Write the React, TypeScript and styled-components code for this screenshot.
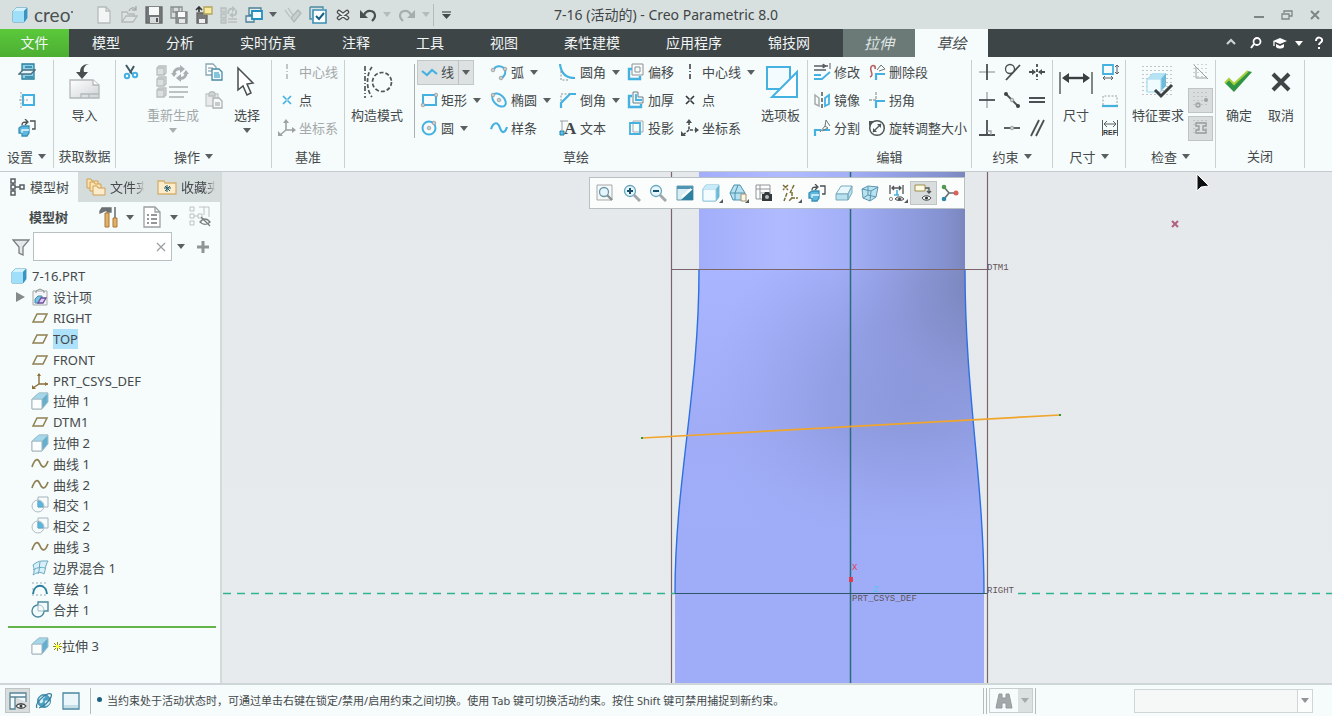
import React from 'react';
import styled, { createGlobalStyle, css } from 'styled-components';

const sans = `"Noto Sans", "Noto Sans CJK SC", sans-serif`;
const ink = '#44494b';
const line = '#505557';
const blue = '#45b1e0';
const teal = '#2a7f9e';
const dark = '#3e4547';

const GlobalStyle = createGlobalStyle`
  * { box-sizing: border-box; }
  body { margin: 0; font-family: ${sans}; font-size: 13px; line-height: 20px; color: ${ink}; background: #f6fbfb; }
  button, input, select { font: inherit; color: inherit; }
  button { border: 0; padding: 0; margin: 0; background: none; white-space: nowrap; }
  svg { display: block; flex: none; }
`;

/* ---------- icons ---------- */

type DrawProps = { w?: number; h?: number; children: React.ReactNode };
const Draw = ({ w = 18, h = w, children }: DrawProps) => (
  <svg width={w} height={h} viewBox={`0 0 ${w} ${h}`} fill="none" stroke={line} strokeWidth="1.3" aria-hidden="true">
    {children}
  </svg>
);

const Caret = ({ color = '#5a5f61' }: { color?: string }) => (
  <svg width="8" height="5" viewBox="0 0 8 5" aria-hidden="true"><path d="M0 0h8L4 5z" fill={color} /></svg>
);

const CreoCube = ({ w = 18 }: { w?: number }) => (
  <svg width={w} height={w} viewBox="0 0 18 18" aria-hidden="true">
    <path d="M2 5L5 2h11v10l-3 4H2z" fill="#4aa9d4" stroke="#4c9fc4" />
    <path d="M2 5h11v11H2z" fill="#a0dff9" />
    <path d="M2 5l3-3h11l-3 3z" fill="#d2f2fe" />
    <path d="M13 5l3-3v10l-3 4z" fill="#3a94c0" />
  </svg>
);

const NewIcon = () => <Draw><path d="M3 1h8l4 4v12H3z" fill="#f3f5f5" stroke="#b5bbbb" /><path d="M11 1v4h4" stroke="#b5bbbb" /></Draw>;
const OpenIcon = () => <Draw><path d="M2 16V6h5l1 2h6v3M2 16l4-6h11l-4 6z" fill="#dfe3e3" stroke="#b3b9b9" /><path d="M9 5c1-3 4-4 7-2M16 0v4h-4" stroke="#a6acac" /></Draw>;
const SaveIcon = () => <Draw><path d="M1 1h16v16H1z" fill="#737779" stroke="#66696a" /><path d="M4 1h10v8H4z" fill="#f7f8f8" stroke="none" /><path d="M5 11h9v6H5z" fill="#d9dcdc" stroke="none" /><path d="M11 12h2v4h-2z" fill="#555" stroke="none" /></Draw>;
const SaveAsIcon = () => <Draw><path d="M1 1h11v11H1z" fill="#d9dddd" stroke="#888d8e" /><path d="M3 1v5h6V1" stroke="#888d8e" /><path d="M6 6h11v11H6z" fill="#8b9091" stroke="#808586" /><path d="M8 6h7v5H8z" fill="#fafafa" stroke="none" /><path d="M9 13h6v4H9z" fill="#e5e7e7" stroke="none" /></Draw>;
const SaveBackupIcon = () => <Draw><path d="M2 7h10v10H2z" fill="#77797a" stroke="#666" /><path d="M4 13h6v4H4z" fill="#eee" stroke="none" /><path d="M9 1h8v7H9z" fill="#f7ea9c" stroke="#b3a45a" /><path d="M4 6V2M1 4l3-3 3 3" stroke="#333" strokeWidth="1.6" /></Draw>;
const RegenSmallIcon = () => <Draw><g stroke="#b8bfbf"><path d="M1 2h5v4H1zM1 8h5v4H1zM1 14h5v3H1zM8 13h9M8 16h9" fill="#cdd3d3" /><path d="M8 8c0-4 2-6 5-5M16 4c1 4-1 6-4 5" strokeWidth="2" /><path d="M12 0l4 3-4 3zM13 6l-4 3 4 3z" fill="#b8bfbf" stroke="none" /></g></Draw>;
const WindowsIcon = () => <Draw><path d="M4 2h12v7H4zM1 10h8v6H1z" stroke="#4b7f96" fill="#e5edef" /><path d="M7 5h10v8H7z" fill="#f6fdff" stroke="#2490bf" strokeWidth="1.8" /></Draw>;
const PinIcon = () => <Draw><path d="M1 4l5 7M4 2l5 7" stroke="#bcc3c3" /><path d="M7 12l7-8 3 3-7 9z" fill="#c9cfcf" stroke="#b0b7b7" /></Draw>;
const CheckBoxIcon = () => <Draw><path d="M1 1h13v2M1 1v12h2" stroke="#4b8aa3" /><path d="M4 4h13v13H4z" fill="#fdffff" stroke="#3a8fb5" strokeWidth="1.6" /><path d="M7 10l3 3 5-6" stroke="#185f86" strokeWidth="2" /></Draw>;
const CloseDotsIcon = () => <Draw w={14}><path d="M3 4l8 6M11 4L3 10" stroke="#4a4e50" strokeWidth="4.500" strokeLinecap="round" /><path d="M3 4l8 6M11 4L3 10" stroke="#e8eded" strokeWidth="2" strokeLinecap="round" /></Draw>;
const UndoIcon = ({ color = '#4a4f51', flip = false }) => (
  <Draw w={18} h={14}><g transform={flip ? 'translate(18 0) scale(-1 1)' : undefined}><path d="M1 2v8h8z" fill={color} stroke="none" /><path d="M5 7c3-6 11-5 11 1 0 2-1 3-3 5" stroke={color} strokeWidth="2.2" /></g></Draw>
);

const SketchSetupIcon = () => <Draw><path d="M4 1h12v15H4z" fill="#8fd0ea" stroke={teal} /><path d="M7 4h7M7 14h8" stroke={teal} /><path d="M1 11l4-4h12l-4 4z" fill="#e7f6fb" stroke="#4b6f80" /></Draw>;
const ReferencesIcon = () => <Draw><path d="M5 4h11v10H5z" stroke={blue} strokeWidth="2" /><path d="M3 1v16M1 9h10" stroke="#9aa2a4" strokeDasharray="2 1.5" strokeWidth="1" /></Draw>;
const SketchViewIcon = () => <Draw><path d="M12 2h5v8h-3M4 6c0-3 2-3 5-3M7 0l3 3-3 3" stroke="#4a4f51" /><path d="M1 9l3-2h7v7l-2 3H4v-3H1z" fill="#5cb8de" stroke="#3a8fb5" /><path d="M4 14v-3h7" stroke="#e6f7fd" /></Draw>;
const ImportIcon = () => <Draw w={32} h={38}><defs><linearGradient id="imp" x2="1" y2="1"><stop stopColor="#fff" /><stop offset="1" stopColor="#cfd3d5" /></linearGradient></defs><path d="M1 17h23l6 5v13H1z" fill="url(#imp)" stroke="#b3b8ba" /><path d="M24 17v5h6" fill="#fff" stroke="#b3b8ba" /><path d="M12 35v-4h18M20 31v4" stroke="#b3b8ba" /><path d="M20 1c-4 1-6 4-5 8h4l-6 7-6-7h4c0-5 3-8 9-8z" fill="#4a4e50" stroke="none" /></Draw>;
const CutIcon = () => <Draw w={16}><path d="M3 1l6 9M11 2L7 9" stroke="#3f5a66" strokeWidth="2" /><circle cx="4" cy="12" r="2.200" stroke={blue} strokeWidth="2" /><circle cx="12" cy="11" r="2.200" stroke={blue} strokeWidth="2" /></Draw>;
const RegenIcon = () => <Draw w={34} h={34}><g fill="#dcdfe0" stroke="#b9bebf"><path d="M1 3l2-2h7v7l-2 2H1zM1 14l2-2h7v7l-2 2H1zM1 25l2-2h7v7l-2 2H1z" /><path d="M1 3h7v7M1 14h7v7M1 25h7v7" fill="none" /></g><path d="M13 22h19M13 27h19M13 32h15" stroke="#bcc1c2" strokeWidth="2" /><path d="M18 9c0-4 3-6 7-5M30 8c0 4-3 6-7 5" stroke="#a9aeb0" strokeWidth="3" /><path d="M24 0l5 4-5 4zM25 9l-5 4 5 4zM15 8h6l-3 4zM27 9h6l-3-4z" fill="#a9aeb0" stroke="none" /></Draw>;
const CopyIcon = () => <Draw><path d="M1 1h7l3 3v8H1z" fill="#fff" stroke="#8aa7b2" /><path d="M3 5h5M3 8h5" stroke="#9db4bd" /><path d="M7 6h7l3 3v8H7z" fill="#f4fbfd" stroke="#4b8aa3" /><path d="M9 10h5M9 12h6M9 14h6" stroke="#5fb3d3" /></Draw>;
const PasteIcon = () => <Draw><path d="M1 3h12v12H1z" fill="#e9ebeb" stroke="#c4c9ca" /><path d="M4 3c0-3 6-3 6 0v2H4z" fill="#d2d5d6" stroke="#b9bebf" /><path d="M8 7h6l3 3v7H8z" fill="#f7f8f8" stroke="#acb1b2" /><path d="M10 12h5M10 14h5" stroke="#b5babb" /></Draw>;
const SelectIcon = () => <Draw w={24} h={34}><path d="M3 3v22l5-4 4 9 4-2-4-9 6-1z" fill="#fff" stroke="#4a4e50" strokeWidth="1.500" /></Draw>;
const DatumLineIcon = ({ color = '#3e4244' }) => <Draw><path d="M9 1v16" stroke={color} strokeWidth="1.600" strokeDasharray="5 2 1 2" /></Draw>;
const PointIcon = ({ color = '#33383a' }) => <Draw><path d="M5 5l3 3M13 5l-3 3M5 13l3-3M13 13l-3-3" stroke={color} strokeWidth="1.700" /><circle cx="9" cy="9" r="1.200" stroke={color} strokeWidth="0.800" /></Draw>;
const CsysIcon = ({ color = '#4b5052', dash = false }) => <Draw><path d="M8 3v8h8M8 11l-6 5" stroke={color} strokeWidth="1.600" strokeDasharray={dash ? '3 1.500' : undefined} /><path d="M5 4l3-4 3 4zM14 8l4 3-4 3zM0 12v5h5z" fill={color} stroke="none" /></Draw>;
const ConstructionIcon = () => <Draw w={32} h={34}><path d="M4 1v32" strokeDasharray="5 2 1 2" strokeWidth="1.700" /><path d="M11 2C5 9 5 25 11 32" strokeDasharray="4 2" strokeWidth="1.700" /><circle cx="21" cy="17" r="9.500" strokeDasharray="4 2" strokeWidth="1.700" /></Draw>;
const Dot = ({ x, y }: { x: number; y: number }) => <circle cx={x} cy={y} r="1.800" fill="#c9cdcf" stroke="#8d9394" strokeWidth="0.700" />;
const LineIcon = () => <Draw><path d="M2 8l5 4 5-5 5 4" stroke={blue} strokeWidth="2.200" /></Draw>;
const ArcIcon = () => <Draw><path d="M4 6c3-5 13-3 11 5-1 2-2 4-4 4" stroke={blue} strokeWidth="2" /><Dot x={3} y={7} /><Dot x={11} y={15} /><Dot x={15} y={6} /></Draw>;
const FilletIcon = () => <Draw><path d="M1 1c1 9 6 14 15 14" stroke={blue} strokeWidth="2.200" /><path d="M2 8v9h8" stroke="#8a8f91" strokeDasharray="2 1.500" strokeWidth="1" /></Draw>;
const OffsetIcon = () => <Draw><path d="M5 1h11v11H5zM8 4h5v5H8z" stroke="#8d9294" strokeWidth="1" /><path d="M5 6H2v10h11v-3" stroke={blue} strokeWidth="2.400" /></Draw>;
const RectIcon = () => <Draw><path d="M3 4h13v10H3z" stroke={blue} strokeWidth="2" /><Dot x={3} y={14} /><Dot x={16} y={4} /></Draw>;
const EllipseIcon = () => <Draw><ellipse cx="9" cy="9" rx="8" ry="5" transform="rotate(42 9 9)" stroke={blue} strokeWidth="2" /><Dot x={9} y={9} /><Dot x={3} y={4} /></Draw>;
const ChamferIcon = () => <Draw><path d="M2 17v-5L11 3h6" stroke={blue} strokeWidth="2.200" /><path d="M2 10V3h8" stroke="#8a8f91" strokeDasharray="2 1.500" strokeWidth="1" /></Draw>;
const ThickenIcon = () => <Draw><path d="M6 1h5v5h5v6H6z" stroke="#6f8088" fill="#eef7fa" strokeWidth="1" /><path d="M5 5H2v11h12v-3" stroke={blue} strokeWidth="2.400" /><path d="M9 3v6h6" stroke={blue} strokeWidth="1.800" /></Draw>;
const CircleIcon = () => <Draw><circle cx="9" cy="9" r="6.500" stroke={blue} strokeWidth="2" /><Dot x={9} y={9} /><Dot x={14} y={4} /></Draw>;
const SplineIcon = () => <Draw><path d="M1 10c3-8 7-7 9-1s5 5 7-1" stroke={blue} strokeWidth="2.200" /></Draw>;
const TextIcon = () => (
  <svg width="18" height="18" viewBox="0 0 18 18" aria-hidden="true">
    <path d="M1 2h8M3 2v9" stroke="#9aa0a2" fill="none" />
    <text x="5" y="15" fontSize="17" fontWeight="700" fontFamily="Liberation Serif, serif" fill="#43484a">A</text>
    <path d="M1 12h4v4H1z" fill="#5ec2ea" stroke="#1c7fa8" />
  </svg>
);
const ProjectIcon = () => <Draw><path d="M6 2h10v11H6z" stroke="#a5abad" strokeWidth="1" /><path d="M3 4h10v11H3z" stroke={blue} strokeWidth="1.800" /></Draw>;
const PaletteIcon = () => <Draw w={36} h={36}><path d="M4 3h23v22H4z" fill="#f4fbfe" stroke={blue} strokeWidth="2" /><path d="M34 8v25H9z" fill="#fcfeff" stroke={blue} strokeWidth="2" /></Draw>;
const ModifyIcon = () => <Draw><path d="M1 3h14M1 7h12" stroke="#5a5f61" strokeWidth="1.600" /><path d="M10 1l3 2-3 2zM17 0v6" fill="#5a5f61" stroke="#5a5f61" strokeWidth="1" /><path d="M1 16h8l8-7M1 12h7" stroke={blue} strokeWidth="1.800" /></Draw>;
const MirrorIcon = () => <Draw><path d="M2 4l4 3v8l-4-2z" stroke="#a5aaac" strokeWidth="1.500" /><path d="M9 1v16" strokeDasharray="4 2" strokeWidth="1.500" /><path d="M16 4l-4 3v8l4-2z" stroke={blue} strokeWidth="1.800" /></Draw>;
const DivideIcon = () => <Draw><path d="M2 17v-6h6M10 11h7" stroke={blue} strokeWidth="2.200" /><path d="M7 13l5-6 3 2-6 3M12 7l1-6 4 6" stroke="#707577" strokeWidth="1" /></Draw>;
const DeleteSegIcon = () => <Draw><path d="M2 14c5-2-1-6 1-10 2-3 5-1 4 2" stroke="#b66060" strokeWidth="1.600" /><path d="M8 17v-6h9" stroke={blue} strokeWidth="2.200" /><path d="M9 7l4-5 4 4-6 2" stroke="#707577" strokeWidth="1" /></Draw>;
const CornerIcon = () => <Draw><path d="M8 1v9M1 9h7" stroke="#9aa0a2" strokeDasharray="3 1" /><path d="M8 17v-7h9" stroke={blue} strokeWidth="2.200" /></Draw>;
const RotateIcon = () => <Draw><circle cx="9" cy="9" r="7.300" strokeWidth="1.500" /><path d="M5 13l8-8" strokeWidth="1.200" /><path d="M9 5h4v4zM5 9v4h4zM1 2h5L1 7z" fill={line} stroke="none" /></Draw>;

const c2 = { stroke: '#4a4f51', strokeWidth: 1.8 };
const VerticalC = () => <Draw><path d="M1 9h16" stroke="#9ba0a2" /><path d="M9 1v16" {...c2} /></Draw>;
const TangentC = () => <Draw><circle cx="7" cy="6" r="4.500" stroke="#4a4f51" /><path d="M3 17L17 2" {...c2} /></Draw>;
const SymmetricC = () => <Draw><path d="M9 1v16" strokeDasharray="3 2" {...c2} /><path d="M1 9h6M11 9h6" {...c2} /><path d="M4 6l4 3-4 3zM14 6l-4 3 4 3z" fill="#4a4f51" stroke="none" /></Draw>;
const HorizontalC = () => <Draw><path d="M9 1v16" stroke="#9ba0a2" /><path d="M1 9h16" {...c2} /></Draw>;
const MidpointC = () => <Draw><path d="M3 3l12 12" {...c2} /><circle cx="3" cy="3" r="2" fill="#3e4345" stroke="none" /><circle cx="15" cy="15" r="2" fill="#3e4345" stroke="none" /><Dot x={9} y={9} /></Draw>;
const EqualC = () => <Draw><path d="M1 7h16M1 11h16" {...c2} /></Draw>;
const PerpendicularC = () => <Draw><path d="M1 16h16M9 1v15" {...c2} /><path d="M9 12h4v4" stroke="#9ba0a2" /></Draw>;
const CoincidentC = () => <Draw><path d="M1 9h16" {...c2} /><Dot x={9} y={9} /></Draw>;
const ParallelC = () => <Draw><path d="M3 17L11 1M8 17L16 1" {...c2} /></Draw>;

const DimensionIcon = () => <Draw w={34} h={26}><path d="M1 3v22M33 3v22" strokeWidth="1.400" /><path d="M5 9h24" stroke="#3a3f41" strokeWidth="2.400" /><path d="M3 9l7-5v10zM31 9l-7-5v10z" fill="#3a3f41" stroke="none" /></Draw>;
const PerimeterIcon = () => <Draw><path d="M2 2h10v9H2z" stroke={blue} strokeWidth="1.800" /><path d="M16 2v9M2 15h10M14 4l2-2 2 2M14 9l2 2 2-2M4 13l-2 2 2 2M10 13l2 2-2 2" stroke="#5a5f61" strokeWidth="1" /></Draw>;
const BaselineIcon = () => <Draw><path d="M2 14V5h14v9" stroke="#9ba0a2" strokeWidth="1" strokeDasharray="2 1.500" /><path d="M1 15h16" stroke={blue} strokeWidth="2.200" /></Draw>;
const RefDimIcon = () => (
  <svg width="18" height="18" viewBox="0 0 18 18" aria-hidden="true">
    <path d="M1.500 1v16M16.500 1v16M3 5h12M6 2L3 5l3 3M12 2l3 3-3 3" fill="none" stroke="#5a5f61" />
    <text x="9" y="16" textAnchor="middle" fontSize="7" fontWeight="700" fontFamily="Liberation Sans, sans-serif" fill="#33383a">REF</text>
  </svg>
);
const FeatureReqIcon = () => <Draw w={34} h={34}><path d="M2 1v32M6 1v32M10 1v32M14 1v32M18 1v32M22 1v32M26 1v32M30 1v32" stroke="#8b9395" strokeWidth="1" strokeDasharray="1 3" /><path d="M6 14l6-6h13v13l-6 6H6z" fill="#6dbadb" stroke="none" /><path d="M6 14h14v13H6z" fill="#f0fbff" stroke="#9fd4ea" strokeWidth="1" /><path d="M6 14l6-6h13l-5 6z" fill="#b5e3f4" stroke="none" /><path d="M14 25l6 6 11-11" stroke="#3c4143" strokeWidth="3" /></Draw>;
const Grid = () => <path d="M2 1v16M6 1v16M10 1v16M14 1v16" stroke="#a7acad" strokeWidth="1" strokeDasharray="1 3" />;
const OverlapIcon = () => <Draw><Grid /><path d="M4 4v11h11zM2 2l14 14" stroke="#9a9fa0" strokeWidth="1" /></Draw>;
const OpenEndsIcon = () => <Draw><Grid /><circle cx="14" cy="9" r="2" fill="#9ca1a2" stroke="none" /><circle cx="6" cy="14" r="2" stroke="#9ca1a2" /></Draw>;
const ShadeLoopIcon = () => <Draw><Grid /><path d="M4 4h10v3h-3v4h3v3H4v-3h3V7H4z" fill="#dfe2e2" stroke="#94999a" /></Draw>;
const OkIcon = () => <Draw w={32} h={28}><path d="M2 15l4-4 5 5L25 3l4 1-18 20z" fill="#2f9444" stroke="none" /><path d="M2 15l4-4 5 5L25 3" stroke="#a6cf3b" strokeWidth="2" /></Draw>;
const CancelIcon = () => <Draw w={24} h={28}><path d="M4 6l16 16M20 6L4 22" stroke="#3f4446" strokeWidth="4" /></Draw>;

const TreeTabIcon = () => <Draw><path d="M3 1h4v4H3zM3 7h4v4H3zM3 13h4v4H3zM12 7h4v4h-4zM7 9h5M5 5v2M5 11v2" stroke="#5a5f61" strokeWidth="1.500" /></Draw>;
const FolderTabIcon = () => <Draw w={20}><g fill="#fbe3b1" stroke="#cf9f52" strokeWidth="1"><path d="M1 2h4l1 2h6v7H1z" /><path d="M4 5h4l1 2h6v7H4z" /><path d="M7 9h4l1 2h7v7H7z" fill="#fdeccb" /></g></Draw>;
const FavTabIcon = () => <Draw w={20}><path d="M1 4h6l1 2h11v11H1z" fill="#fdeccb" stroke="#d3b06f" /><path d="M10 8v7M7 11h7M8 9l5 5M13 9l-5 5" stroke="#1f5c70" strokeWidth="1" /></Draw>;
const ToolsIcon = () => <Draw w={20} h={22}><path d="M1 5l2-3h9v4H8V4l-7 3z" fill="#6e7375" stroke="#6a6f71" /><path d="M6 7h4v14H6z" fill="#e3b064" stroke="#a9793a" strokeWidth="1" /><path d="M16 1v11" stroke="#8a8f91" strokeWidth="2" /><path d="M14 12h4v9h-4z" fill="#e3b064" stroke="#a9793a" strokeWidth="1" /></Draw>;
const ListIcon = () => <Draw w={18} h={22}><path d="M1 1h11l5 5v15H1z" fill="#fff" stroke="#9ba0a2" /><path d="M12 1v5h5" stroke="#9ba0a2" /><path d="M4 9h2M4 13h2M4 17h2M8 9h6M8 13h6M8 17h6" stroke="#707577" /></Draw>;
const HideTreeIcon = () => <Draw w={22}><path d="M1 1h4v4H1zM1 8h4v4H1zM1 15h4v4H1zM9 8h4v4H9zM5 10h4M10 1h10v10M15 1v8" stroke="#bcc1c2" strokeWidth="1" /><path d="M11 16c3-4 7-4 10 0-3 3-7 3-10 0zM12 11l9 9" stroke="#777c7e" /></Draw>;
const FilterIcon = () => <Draw><path d="M1 2h16l-6 7v8l-4-2V9z" fill="#e5e8e9" stroke="#7a7f81" /></Draw>;

const DesignItemsIcon = () => <Draw><path d="M2 3h14v14H2z" fill="#f2f4f5" stroke="#a5aaac" strokeWidth="1" /><path d="M5 5V3l4-2 4 2v2" stroke="#8b9092" strokeWidth="1" /><path d="M4 11l3-3h4v4l-3 3H4z" fill="#72c3e4" stroke="#4b8aa3" strokeWidth="1" /><path d="M7 15l3-5h5l-3 5z" fill="#e0cdf2" stroke="#6a4f9a" /></Draw>;
const PlaneIcon = () => <Draw><path d="M6 5h10l-4 8H2z" stroke="#8f8052" strokeWidth="1.500" /></Draw>;
const TreeCsysIcon = () => <Draw><path d="M8 2v10h9M8 12l-6 4" stroke="#8a6f38" strokeWidth="1.400" /><path d="M6 4l2-3 2 3zM14 10l3 2-3 2zM1 13v4h4z" fill="#8a6f38" stroke="none" /></Draw>;
const ExtrudeIcon = () => <Draw><path d="M1 7l7-6h9v9l-6 7H1z" fill="#62afd0" stroke="#a3c2ce" strokeWidth="1" /><path d="M1 7h10v10H1z" fill="#fafeff" stroke="#a8b3b8" strokeWidth="1" /><path d="M1 7l7-6h9l-6 6z" fill="#a5d7ea" stroke="#a3c2ce" strokeWidth="1" /></Draw>;
const CurveIcon = () => <Draw><path d="M1 12C4 3 7 3 9 8s5 6 8-2" stroke="#8f8052" strokeWidth="1.700" /></Draw>;
const IntersectIcon = () => <Draw><path d="M7 1h10v10H7z" stroke="#a3b4bb" strokeWidth="1" /><circle cx="7" cy="10" r="6" stroke="#b0bdc3" strokeWidth="1" /><path d="M7 5a5 5 0 015 5v1H7z" fill="#57b9e2" stroke="#5aa9c9" strokeWidth="1" /></Draw>;
const BlendIcon = () => <Draw><path d="M2 6c3-2 5-4 9-4h6c-3 4-2 8-4 13-4-3-8-1-11 1 2-4 1-7 0-10z" fill="#d8f0f9" stroke="#6aa9c2" strokeWidth="1" /><path d="M9 3c-1 4 0 8-2 12M2 11c5-3 9-3 12-2" stroke="#6aa9c2" strokeWidth="1" /></Draw>;
const SketchIcon = () => <Draw><path d="M1 3h16M1 9h3M14 9h3M1 15h16" stroke="#8fabb6" strokeDasharray="2 2" strokeWidth="1" /><path d="M2 14c1-11 13-11 14 0" stroke={teal} strokeWidth="2" /></Draw>;
const MergeIcon = () => <Draw><path d="M7 4V1h10v9h-4a6 6 0 11-6-6z" fill="#f3fbfd" stroke="#4b8a9d" strokeWidth="1.400" /><path d="M7 4v6h6c0-4-2-6-6-6" stroke="#9dbcc6" strokeWidth="1" /></Draw>;
const NewStarIcon = () => <Draw w={9}><path d="M4.500 0v9M0 4.500h9M1 1l7 7M8 1L1 8" stroke="#8a9000" strokeWidth="1" /><path d="M3 3h3v3H3z" fill="#ffff28" stroke="none" /></Draw>;

const mag = (sign: string) => <Draw><path d="M11 11l6 6" stroke="#a3a8aa" strokeWidth="3" /><circle cx="7" cy="7" r="5.500" fill="#e6f6fc" stroke="#6aa5bc" /><path d={sign} stroke="#15516d" strokeWidth="2" /></Draw>;
const RefitIcon = () => <Draw><path d="M1 1h15v15H1z" stroke="#a3a9ab" fill="#f7f9f9" strokeWidth="1" /><circle cx="8" cy="8" r="4.500" fill="#e4f5fb" stroke="#6a96a8" /><path d="M11 11l5 5" stroke="#8a9092" strokeWidth="2.400" /></Draw>;
const RepaintIcon = () => <Draw><path d="M1 2h16v14H1z" fill="#d9edf4" stroke="#6a9caf" strokeWidth="1" /><path d="M1 2h16v3H1z" fill="#4f94b2" stroke="none" /><path d="M5 16L17 5v11z" fill="#2f7f9f" stroke="none" /><path d="M6 13l9-8" stroke="#fff" strokeWidth="2" /></Draw>;
const ShadeBoxIcon = () => <Draw><path d="M1 5l3-4h13v12l-3 4H1z" fill="#69b8d8" stroke="#7abbd5" strokeWidth="1" /><path d="M1 5h13v12H1z" fill="#f3fcff" stroke="#9accdf" strokeWidth="1" /><path d="M1 5l3-4h13l-3 4z" fill="#c8ebf7" stroke="none" /></Draw>;
const SavedViewIcon = () => <Draw><path d="M1 9l4-8h6l5 8-2 7H4z" fill="#b5e1f1" stroke="#4f93ae" strokeWidth="1" /><path d="M1 9h15M6 9l3-8M6 9v7" stroke="#4f93ae" strokeWidth="1" /><path d="M12 10h5v7h-5z" fill="#fff6df" stroke="#9a9278" strokeWidth="1" /></Draw>;
const ViewMgrIcon = () => <Draw><path d="M1 1h14v14H1zM1 5h14M5 1v14M5 9h10" stroke="#8f9597" strokeWidth="1" /><path d="M7 10h2l1-2h4l1 2h2v7H7z" fill="#33383a" stroke="none" /><circle cx="12" cy="13" r="2" fill="#b5babc" stroke="none" /></Draw>;
const DatumDispIcon = () => <Draw><path d="M1 1l5 5M6 1L1 6M12 1L8 9M5 9l-3 8M10 8v6h6M10 14l-3 3" stroke="#7d6d35" strokeWidth="1.500" strokeDasharray="4 1" /></Draw>;
const PerspIcon = () => <Draw><path d="M1 10l5-8h11l-4 8z" fill="#e8f8fd" stroke="#7aa9bb" strokeWidth="1" /><path d="M1 10h12v6H1zM13 10l4-8v7l-4 7z" fill="#b9e2f0" stroke="#7aa9bb" strokeWidth="1" /></Draw>;
const WireBoxIcon = () => <Draw><path d="M1 5l6-3 10 1-2 10-6 4-7-3z" fill="#b9e2f0" stroke="#5a96ae" strokeWidth="1" /><path d="M1 5l9 2 7-4M10 7l-1 10M7 2v9l8 2M7 11l-5 3" stroke="#5a96ae" strokeWidth="1" /></Draw>;
const DimDispIcon = () => <Draw><path d="M2 1v9M15 1v9M4 4h9M6 2L4 4l2 2M11 2l2 2-2 2" /><path d="M9 6v5M6 11h5" stroke={blue} strokeWidth="1.600" /><circle cx="3" cy="15" r="1.600" stroke="#888" strokeWidth="1" /><path d="M7 15c2-3 7-3 9 0-2 2-7 2-9 0z" fill="#d7dadb" strokeWidth="1" /><circle cx="11.500" cy="15" r="1.500" fill={ink} stroke="none" /></Draw>;
const AnnoDispIcon = () => <Draw><path d="M1 1h10v6H1z" fill="#fffbe0" stroke="#9b8f50" strokeWidth="1" /><path d="M11 4h4v5M13 7l2 2 2-2" /><path d="M8 14c2-3 7-3 9 0-2 3-7 3-9 0z" fill="#fff" stroke="#44494b" strokeWidth="1" /><circle cx="12.500" cy="14" r="1.600" fill="#33383a" stroke="none" /></Draw>;
const SpinCenterIcon = () => <Draw><path d="M3 3l5 6 7 0M8 9l-5 6" stroke="#6a7072" strokeWidth="1.700" /><circle cx="3" cy="3" r="2.300" fill="#4f9a4f" stroke="none" /><circle cx="15" cy="9" r="2.500" fill="#d9635b" stroke="none" /><circle cx="3" cy="15" r="2.300" fill="#2f86a8" stroke="none" /></Draw>;

const NavPanelIcon = () => <Draw><path d="M1 1h16v4H1zM1 5h5v12H1zM6 5h11v5" fill="#f2fafc" stroke="#5a8495" /><path d="M7 14c2-3 8-3 10 0-2 3-8 3-10 0z" fill="#fff" stroke="#44494b" /><circle cx="12" cy="14" r="1.500" fill="#33383a" stroke="none" /></Draw>;
const BrowserIcon = () => <Draw><circle cx="9" cy="9" r="6.500" fill="#4a9fc4" stroke="#4a8fac" strokeWidth="1" /><path d="M4 7c1-3 5-4 6-3 1 2-3 2-2 4s-2 4-3 3zM10 9c2-1 5 0 5 1-1 3-3 4-5 4 1-2-1-3 0-5z" fill="#d8f0f5" stroke="none" /><path d="M2 16C-1 11 12 0 16 2c2 2-4 11-12 14" stroke="#3a7f9c" /></Draw>;
const FullScreenIcon = () => <Draw><path d="M1 1h16v16H1z" fill="#eaf6fa" stroke="#4b87a0" /><path d="M2 13h14v3H2z" fill="#c5deE8" stroke="none" /></Draw>;
const BinocularsIcon = () => <Draw><path d="M4 2h3v4h4V2h3l3 14h-6v-5H7v5H1z" fill="#a3a8aa" stroke="#94999b" strokeWidth="1" /></Draw>;

/* ---------- title bar ---------- */

const Shell = styled.div`min-height: 100vh; display: flex; flex-direction: column; overflow: hidden;`;

const TitleBar = styled.header`
  height: 29px; background: #d8e0df; display: grid; grid-template-columns: 1fr auto 1fr; align-items: center;
`;
const QuickAccess = styled.div`display: flex; align-items: center; padding-left: 11px; height: 100%;`;
const Brand = styled.span`
  display: flex; align-items: center; gap: 5px; width: 80px; font-family: Lato, sans-serif; font-size: 19px; line-height: 24px; color: #4b5052;
`;
const BrandMark = styled.i`width: 2px; height: 2px; margin: 0 0 6px -4px; border-radius: 50%; background: #4b5052;`;
const QuickButton = styled.button<{ $w?: number }>`
  width: ${p => p.$w ?? 25}px; height: 25px; display: flex; align-items: center; justify-content: center;
`;
const Rule = styled.i<{ $h?: number }>`width: 1px; height: ${p => p.$h ?? 22}px; background: #b3bbbb;`;
const Title = styled.h1`margin: 0; font-size: 14px; font-weight: 400; line-height: 20px; color: #3f4446;`;
const WindowButtons = styled.div`display: flex; justify-content: flex-end; padding-right: 3px;`;

/* ---------- tab bar ---------- */

const TabBar = styled.nav`height: 28px; background: ${dark}; display: flex;`;
const Tab = styled.button<{ $kind?: 'file' | 'context' | 'active' }>`
  padding: 0 23px; font-size: 14px; line-height: 28px; color: #f2f6f6;
  ${p => p.$kind === 'file' && css`padding: 0; width: 69px; background: linear-gradient(#5bc93a, #4cae33);`}
  ${p => p.$kind === 'context' && css`margin-left: 10px; padding: 0; width: 72px; font-size: 15px; font-style: italic; background: #6b7977; color: #dfe6e5;`}
  ${p => p.$kind === 'active' && css`padding: 0; width: 73px; font-size: 15px; font-style: italic; background: #f6fbfb; color: ${ink};`}
`;
const TabTools = styled.div`margin-left: auto; display: flex; align-items: center; padding-right: 1px;`;

/* ---------- ribbon ---------- */

const Ribbon = styled.section`
  display: flex; height: 115px; padding-top: 1px; background: #f6fbfb; border-bottom: 1px solid #c3cbce;
`;
const Divider = styled.i`width: 1px; margin: 2px 0 3px; background: #c9d0d2;`;
const InnerDivider = styled.i`width: 1px; margin: 6px 2px 4px 5px; background: #a9b1b3;`;
const GroupBox = styled.div<{ $w: number }>`width: ${p => p.$w}px; display: flex; flex-direction: column;`;
const GroupBody = styled.div<{ $start?: boolean }>`
  height: 84px; display: flex; justify-content: ${p => (p.$start ? 'flex-start' : 'center')};
`;
const GroupLabel = styled.div`
  height: 30px; display: flex; align-items: center; justify-content: center; gap: 5px; white-space: nowrap;
`;
const BigButton = styled.button<{ $w: number }>`
  width: ${p => p.$w}px; padding-top: 4px; display: flex; flex-direction: column; align-items: center; justify-content: flex-start; line-height: 26px;
  &:disabled { color: #a3a9aa; }
`;
const BigIcon = styled.span`height: 40px; display: flex; align-items: center;`;
const ToolGrid = styled.div<{ $cols: string }>`
  display: grid; grid-template-columns: ${p => p.$cols}; grid-template-rows: repeat(3, 28px); grid-auto-flow: column;
  align-items: center;
`;
const Tool = styled.button<{ $on?: boolean }>`
  justify-self: start; height: 25px; display: flex; align-items: center; gap: 3px; padding: 0 3px;
  &:disabled { color: #a3a9aa; }
  ${p => p.$on && css`background: #dde1e1; box-shadow: inset 0 0 0 1px #c2c7c8;`}
`;
const CaretSlot = styled.span<{ $split?: boolean }>`
  display: flex; align-items: center; height: 25px; margin-left: ${p => (p.$split ? 1 : 3)}px;
  ${p => p.$split && css`border-left: 1px solid #bcc2c3; padding: 0 1px 0 3px;`}
`;
const IconTool = styled.button<{ $on?: boolean }>`
  justify-self: center; width: 25px; height: 25px; display: flex; align-items: center; justify-content: center;
  ${p => p.$on && css`background: #d9dddd; box-shadow: inset 0 0 0 1px #bfc4c5;`}
`;

type GroupProps = { w: number; label: string; menu?: boolean; start?: boolean; children?: React.ReactNode };
const Group = ({ w, label, menu, start, children }: GroupProps) => (
  <>
    <GroupBox $w={w}>
      <GroupBody $start={start}>{children}</GroupBody>
      <GroupLabel>{label}{menu && <Caret />}</GroupLabel>
    </GroupBox>
    <Divider />
  </>
);

type BigProps = { w: number; icon: React.ReactNode; label: string; menu?: boolean; disabled?: boolean };
const Big = ({ w, icon, label, menu, disabled }: BigProps) => (
  <BigButton $w={w} disabled={disabled}>
    <BigIcon>{icon}</BigIcon>{label}{menu && <Caret color={disabled ? '#a9afb0' : undefined} />}
  </BigButton>
);

type CommandProps = { icon: React.ReactNode; label: string; menu?: boolean; on?: boolean; disabled?: boolean };
const Command = ({ icon, label, menu, on, disabled }: CommandProps) => (
  <Tool $on={on} disabled={disabled}>
    {icon}{label}{menu && <CaretSlot $split={on}><Caret /></CaretSlot>}
  </Tool>
);

/* ---------- work area ---------- */

const Work = styled.main`flex: 1; display: flex; min-height: 511px;`;
const Sidebar = styled.aside`
  width: 222px; flex: none; background: #f6fbfb; border-right: 2px solid #d3dada; display: flex; flex-direction: column;
`;
const SideTabs = styled.div`display: flex; height: 30px; background: #d5dddc;`;
const SideTab = styled.button<{ $on?: boolean; $w: number }>`
  width: ${p => p.$w}px; display: flex; align-items: center; gap: 4px; padding-left: 8px;
  background: ${p => (p.$on ? '#f6fbfb' : 'transparent')};
`;
const Faded = styled.span`mask-image: linear-gradient(90deg, #000 66%, transparent 88%);`;
const PanelHead = styled.div`height: 30px; display: flex; align-items: center; padding-left: 29px;`;
const PanelTitle = styled.h2`margin: 0; width: 68px; font-size: 13px; line-height: 20px; font-weight: 700;`;
const PanelButton = styled.button<{ $w: number }>`
  width: ${p => p.$w}px; height: 26px; display: flex; align-items: center; justify-content: center;
`;
const FilterRow = styled.div`display: flex; align-items: center; height: 29px; padding-left: 12px;`;
const SearchBox = styled.label`
  margin-left: 3px; width: 139px; height: 29px; display: flex; align-items: center; padding: 0 5px 0 4px; background: #fff; border: 1px solid #b9c0c1;
`;
const SearchInput = styled.input`flex: 1; min-width: 0; border: 0; outline: 0; background: transparent;`;
const Tree = styled.ul`
  list-style: none; margin: 5px 0 0; padding: 0; height: 354px; display: grid; grid-auto-rows: 1fr;
`;
const TreeRow = styled.li<{ $root?: boolean }>`
  display: flex; align-items: center; gap: 4px; padding-left: ${p => (p.$root ? 10 : 31)}px; white-space: nowrap; position: relative;
`;
const Expander = styled.button`position: absolute; left: 16px; display: flex;`;
const TreeName = styled.span<{ $on?: boolean }>`
  display: flex; align-items: center; background: ${p => (p.$on ? '#aee2fa' : 'transparent')};
`;
const InsertBar = styled.hr`width: calc(100% - 12px); margin: 6px 4px 8px 8px; border: 0; border-top: 2px solid #63b54a;`;

const Stage = styled.section`flex: 1; min-width: 0; position: relative; background: linear-gradient(#e6e9ec, #e8ebee);`;
const Scene = styled.svg`position: absolute; inset: 0; width: 100%; height: 100%;`;
const ViewBar = styled.div`
  position: absolute; top: 5px; left: 0; right: 0; margin: 0 auto; width: 376px; height: 32px; padding: 3px 1px 3px 2px; display: flex;
  background: #fbfdfd; border: 1px solid #b9c0c4;
`;
const ViewButton = styled.button<{ $on?: boolean }>`
  flex: 1; display: flex; align-items: center; justify-content: center; position: relative;
  ${p => p.$on && css`background: #d9dddd; box-shadow: inset 0 0 0 1px #bfc4c5;`}
`;
const Fly = styled.i`
  position: absolute; right: 2px; bottom: 2px; border: 2px solid #55595b; border-top-color: transparent; border-left-color: transparent;
`;

/* ---------- status bar ---------- */

const StatusBar = styled.footer`
  height: 33px; display: flex; align-items: center; background: #f6fbfb; border-top: 2px solid #cfd6d7; padding-left: 5px; font-size: 11px; white-space: nowrap;
`;
const StatusMessage = styled.p`margin: 0 0 0 6px; display: flex; align-items: center; gap: 5px;`;
const Bullet = styled.i`width: 5px; height: 5px; border-radius: 50%; background: #1f5f80; margin-bottom: 2px;`;
const StatusRule = styled(Rule)`margin-left: 6px;`;
const StatusTail = styled.div`margin-left: auto; display: flex; align-items: center; gap: 2px; padding-right: 19px;`;
const FindButton = styled.button`display: flex; height: 25px; border: 1px solid #c8cecf;`;
const FindIcon = styled.span`width: 28px; display: flex; align-items: center; justify-content: center;`;
const FindCaret = styled.span`width: 14px; display: flex; align-items: center; justify-content: center; background: #dbe1e1;`;
const FilterSelect = styled.label`position: relative; display: flex; align-items: center; margin-left: 96px;`;
const NativeSelect = styled.select`
  appearance: none; width: 179px; height: 24px; border: 1px solid #d0d5d6; border-radius: 0; background: #f6f8f8; padding: 0 20px 0 4px;
`;
const SelectCaret = styled.span`
  position: absolute; right: 1px; width: 15px; height: 22px; border-left: 1px solid #d0d5d6; background: #fbfdfd; display: flex; align-items: center; justify-content: center; pointer-events: none;
`;

/* ---------- data ---------- */

const tabs = ['模型', '分析', '实时仿真', '注释', '工具', '视图', '柔性建模', '应用程序', '锦技网'];

const treeItems: { name: string; icon: React.ReactNode; root?: boolean; expand?: boolean; on?: boolean }[] = [
  { name: '7-16.PRT', icon: <CreoCube />, root: true },
  { name: '设计项', icon: <DesignItemsIcon />, expand: true },
  { name: 'RIGHT', icon: <PlaneIcon /> },
  { name: 'TOP', icon: <PlaneIcon />, on: true },
  { name: 'FRONT', icon: <PlaneIcon /> },
  { name: 'PRT_CSYS_DEF', icon: <TreeCsysIcon /> },
  { name: '拉伸 1', icon: <ExtrudeIcon /> },
  { name: 'DTM1', icon: <PlaneIcon /> },
  { name: '拉伸 2', icon: <ExtrudeIcon /> },
  { name: '曲线 1', icon: <CurveIcon /> },
  { name: '曲线 2', icon: <CurveIcon /> },
  { name: '相交 1', icon: <IntersectIcon /> },
  { name: '相交 2', icon: <IntersectIcon /> },
  { name: '曲线 3', icon: <CurveIcon /> },
  { name: '边界混合 1', icon: <BlendIcon /> },
  { name: '草绘 1', icon: <SketchIcon /> },
  { name: '合并 1', icon: <MergeIcon /> },
];

const viewTools: { label: string; icon: React.ReactNode; fly?: boolean; on?: boolean }[] = [
  { label: '重新调整', icon: <RefitIcon /> },
  { label: '放大', icon: mag('M4 7h6M7 4v6') },
  { label: '缩小', icon: mag('M4 7h6') },
  { label: '重画', icon: <RepaintIcon /> },
  { label: '显示样式', icon: <ShadeBoxIcon />, fly: true },
  { label: '已保存方向', icon: <SavedViewIcon />, fly: true },
  { label: '视图管理器', icon: <ViewMgrIcon /> },
  { label: '基准显示', icon: <DatumDispIcon />, fly: true },
  { label: '草绘视图', icon: <SketchViewIcon /> },
  { label: '修剪模型', icon: <PerspIcon /> },
  { label: '透视图', icon: <WireBoxIcon /> },
  { label: '草绘器显示', icon: <DimDispIcon />, fly: true },
  { label: '注释显示', icon: <AnnoDispIcon />, on: true },
  { label: '旋转中心', icon: <SpinCenterIcon /> },
];

const constraints: [string, React.ReactNode][] = [
  ['竖直', <VerticalC />], ['水平', <HorizontalC />], ['垂直', <PerpendicularC />],
  ['相切', <TangentC />], ['中点', <MidpointC />], ['重合', <CoincidentC />],
  ['对称', <SymmetricC />], ['相等', <EqualC />], ['平行', <ParallelC />],
];

const ModelScene = () => (
  <Scene aria-label="7-16">
    <defs>
      <linearGradient id="barrel">
        <stop offset="0" stopColor="#a3aefb" /><stop offset="0.330" stopColor="#b0bbff" /><stop offset="0.560" stopColor="#a3aff6" />
        <stop offset="0.750" stopColor="#929fe3" /><stop offset="0.920" stopColor="#8592d0" /><stop offset="1" stopColor="#7a87be" />
      </linearGradient>
      <linearGradient id="skirt" x2="0" y2="1">
        <stop offset="0" stopColor="#a9b5ff" /><stop offset="0.500" stopColor="#a0acf6" /><stop offset="1" stopColor="#9fadf8" />
      </linearGradient>
      <radialGradient id="belly" gradientUnits="userSpaceOnUse" cx="690" cy="225" r="200">
        <stop offset="0" stopColor="#8b98da" /><stop offset="0.400" stopColor="#8f9ce0" stopOpacity="0.850" /><stop offset="1" stopColor="#97a4ea" stopOpacity="0" />
      </radialGradient>
      <radialGradient id="shade" gradientUnits="userSpaceOnUse" cx="765" cy="110" r="150">
        <stop offset="0" stopColor="#717dae" stopOpacity="0.950" /><stop offset="0.500" stopColor="#808cc6" stopOpacity="0.600" /><stop offset="1" stopColor="#8c98dc" stopOpacity="0" />
      </radialGradient>
      <linearGradient id="fade" x2="0" y2="1"><stop offset="0.500" stopColor="#9fadf8" stopOpacity="0" /><stop offset="0.900" stopColor="#9fadf8" /></linearGradient>
      <path id="body" d="M477 98C477 220 453 310 453 421H762C762 310 743 220 743 98z" />
    </defs>
    <path d="M477 0h266v98H477z" fill="url(#barrel)" />
    <use href="#body" fill="url(#skirt)" />
    <use href="#body" fill="url(#belly)" />
    <use href="#body" fill="url(#shade)" />
    <use href="#body" fill="url(#fade)" />
    <path d="M453 421h309v90H453z" fill="#9fadf8" />
    <path d="M477 98C477 220 453 310 453 421M743 98C743 220 762 310 762 421" fill="none" stroke="#2d70e2" strokeWidth="1.400" />
    <path d="M449.500 0v511M765.500 0v511M449 97.500h317M453 421.500h312" fill="none" stroke="#7d646a" strokeWidth="1.200" />
    <path d="M628.500 0v511" stroke="#2c6a7c" strokeWidth="1.500" />
    <line x1="1" x2="453" y1="421.500" y2="421.500" stroke="#2fb392" strokeWidth="1.400" strokeDasharray="8 6" />
    <line x1="796" x2="100%" y1="421.500" y2="421.500" stroke="#2fb392" strokeWidth="1.400" strokeDasharray="8 6" />
    <path d="M453 421.500h312" stroke="#2e5668" />
    <path d="M420 266L838 243" stroke="#f0a52c" strokeWidth="1.700" />
    <path d="M419 265h2v2h-2zM837 242h2v2h-2z" fill="#2f9a2f" />
    <path d="M627 405h4v5h-4z" fill="#e23b4d" />
    <g fontFamily="Liberation Mono, monospace" fontSize="9" fill="#5f5358">
      <text x="765" y="98">DTM1</text>
      <text x="765" y="421">RIGHT</text>
      <text x="630" y="429">PRT_CSYS_DEF</text>
      <text x="630" y="398" fill="#e23b4d">X</text>
      <text x="651" y="420" fill="#5cc3f0">Z</text>
    </g>
    <path d="M950 49l6 6M956 49l-6 6" stroke="#b0627c" strokeWidth="2" />
    <path d="M975 2v17l4-4 8-1z" fill="#0d0f10" stroke="#fff" strokeWidth="1" />
  </Scene>
);

export default function App() {
  return (
    <Shell>
      <GlobalStyle />
      <TitleBar>
        <QuickAccess>
          <Brand><CreoCube />creo<BrandMark /></Brand>
          <QuickButton aria-label="新建"><NewIcon /></QuickButton>
          <QuickButton aria-label="打开"><OpenIcon /></QuickButton>
          <QuickButton aria-label="保存"><SaveIcon /></QuickButton>
          <QuickButton aria-label="另存为"><SaveAsIcon /></QuickButton>
          <QuickButton aria-label="保存备份"><SaveBackupIcon /></QuickButton>
          <QuickButton aria-label="重新生成"><RegenSmallIcon /></QuickButton>
          <QuickButton aria-label="窗口"><WindowsIcon /></QuickButton>
          <QuickButton $w={14} aria-label="窗口列表"><Caret /></QuickButton>
          <QuickButton aria-label="拭除"><PinIcon /></QuickButton>
          <QuickButton aria-label="激活"><CheckBoxIcon /></QuickButton>
          <QuickButton aria-label="关闭窗口"><CloseDotsIcon /></QuickButton>
          <QuickButton aria-label="撤消"><UndoIcon /></QuickButton>
          <QuickButton $w={14} aria-label="撤消列表"><Caret color="#b4bbbb" /></QuickButton>
          <QuickButton aria-label="重做"><UndoIcon color="#a5adad" flip /></QuickButton>
          <QuickButton $w={14} aria-label="重做列表"><Caret color="#b4bbbb" /></QuickButton>
          <Rule />
          <QuickButton aria-label="自定义快速访问工具栏">
            <Draw w={9} h={8}><path d="M0 1h9" /><path d="M0 3h9L4.500 8z" fill={ink} stroke="none" /></Draw>
          </QuickButton>
        </QuickAccess>
        <Title>7-16 (活动的) - Creo Parametric 8.0</Title>
        <WindowButtons>
          <QuickButton $w={28} aria-label="最小化"><Draw w={12}><path d="M1 8h10" stroke="#7d8586" strokeWidth="2" /></Draw></QuickButton>
          <QuickButton $w={28} aria-label="还原"><Draw w={12}><path d="M3 4V2h8v5H8M1 5h7v5H1z" stroke="#7d8586" /></Draw></QuickButton>
          <QuickButton $w={28} aria-label="关闭"><Draw w={12}><path d="M2 2l8 8M10 2l-8 8" stroke="#7d8586" strokeWidth="2" /></Draw></QuickButton>
        </WindowButtons>
      </TitleBar>

      <TabBar>
        <Tab $kind="file">文件</Tab>
        {tabs.map(t => <Tab key={t}>{t}</Tab>)}
        <Tab $kind="context">拉伸</Tab>
        <Tab $kind="active">草绘</Tab>
        <TabTools>
          <QuickButton $w={24} aria-label="最小化功能区"><Draw w={12}><path d="M2 7l4-4 4 4" stroke="#cdd3d3" strokeWidth="2.200" /></Draw></QuickButton>
          <QuickButton $w={25} aria-label="搜索"><Draw w={14}><circle cx="8" cy="5.500" r="3.500" stroke="#fff" strokeWidth="1.800" /><path d="M5 8l-3 4" stroke="#fff" strokeWidth="2" /></Draw></QuickButton>
          <QuickButton $w={24} aria-label="学习"><Draw w={14}><path d="M7 2l7 3-7 3-7-3zM3 8v3c2 2 6 2 8 0V8L7 10z" fill="#fff" stroke="none" /><path d="M1 5v5" stroke="#fff" /></Draw></QuickButton>
          <QuickButton $w={14} aria-label="学习列表"><Caret color="#fff" /></QuickButton>
          <QuickButton aria-label="帮助"><Draw w={12} h={14}><path d="M3 5c0-5 7-4 6 0-1 2-3 2-3 4M6 11v2" stroke="#fff" strokeWidth="2" /></Draw></QuickButton>
        </TabTools>
      </TabBar>

      <Ribbon>
        <Group w={53} label="设置" menu>
          <ToolGrid $cols="25px">
            <IconTool aria-label="草绘设置"><SketchSetupIcon /></IconTool>
            <IconTool aria-label="参考"><ReferencesIcon /></IconTool>
            <IconTool aria-label="草绘视图"><SketchViewIcon /></IconTool>
          </ToolGrid>
        </Group>
        <Group w={61} label="获取数据"><Big w={60} icon={<ImportIcon />} label="导入" /></Group>
        <Group w={155} label="操作" menu start>
          <ToolGrid $cols="29px"><IconTool aria-label="剪切"><CutIcon /></IconTool></ToolGrid>
          <Big w={56} icon={<RegenIcon />} label="重新生成" menu disabled />
          <ToolGrid $cols="26px">
            <IconTool aria-label="复制"><CopyIcon /></IconTool>
            <IconTool aria-label="粘贴"><PasteIcon /></IconTool>
          </ToolGrid>
          <Big w={40} icon={<SelectIcon />} label="选择" menu />
        </Group>
        <Group w={72} label="基准">
          <ToolGrid $cols="66px">
            <Command icon={<DatumLineIcon color="#b4b9ba" />} label="中心线" disabled />
            <Command icon={<PointIcon color={blue} />} label="点" />
            <Command icon={<CsysIcon color="#9ca2a3" />} label="坐标系" disabled />
          </ToolGrid>
        </Group>
        <Group w={462} label="草绘">
          <Big w={64} icon={<ConstructionIcon />} label="构造模式" />
          <InnerDivider />
          <ToolGrid $cols="70px 69px 68px 54px 76px">
            <Command icon={<LineIcon />} label="线" menu on />
            <Command icon={<RectIcon />} label="矩形" menu />
            <Command icon={<CircleIcon />} label="圆" menu />
            <Command icon={<ArcIcon />} label="弧" menu />
            <Command icon={<EllipseIcon />} label="椭圆" menu />
            <Command icon={<SplineIcon />} label="样条" />
            <Command icon={<FilletIcon />} label="圆角" menu />
            <Command icon={<ChamferIcon />} label="倒角" menu />
            <Command icon={<TextIcon />} label="文本" />
            <Command icon={<OffsetIcon />} label="偏移" />
            <Command icon={<ThickenIcon />} label="加厚" />
            <Command icon={<ProjectIcon />} label="投影" />
            <Command icon={<DatumLineIcon />} label="中心线" menu />
            <Command icon={<PointIcon />} label="点" />
            <Command icon={<CsysIcon dash />} label="坐标系" />
          </ToolGrid>
          <Big w={53} icon={<PaletteIcon />} label="选项板" />
        </Group>
        <Group w={163} label="编辑">
          <ToolGrid $cols="55px 104px">
            <Command icon={<ModifyIcon />} label="修改" />
            <Command icon={<MirrorIcon />} label="镜像" />
            <Command icon={<DivideIcon />} label="分割" />
            <Command icon={<DeleteSegIcon />} label="删除段" />
            <Command icon={<CornerIcon />} label="拐角" />
            <Command icon={<RotateIcon />} label="旋转调整大小" />
          </ToolGrid>
        </Group>
        <Group w={80} label="约束" menu>
          <ToolGrid $cols="25px 25px 25px">
            {constraints.map(([label, icon]) => <IconTool key={label} aria-label={label}>{icon}</IconTool>)}
          </ToolGrid>
        </Group>
        <Group w={72} label="尺寸" menu start>
          <Big w={46} icon={<DimensionIcon />} label="尺寸" />
          <ToolGrid $cols="22px">
            <IconTool aria-label="周长"><PerimeterIcon /></IconTool>
            <IconTool aria-label="基线"><BaselineIcon /></IconTool>
            <IconTool aria-label="参考尺寸"><RefDimIcon /></IconTool>
          </ToolGrid>
        </Group>
        <Group w={89} label="检查" menu>
          <Big w={60} icon={<FeatureReqIcon />} label="特征要求" />
          <ToolGrid $cols="25px">
            <IconTool aria-label="重叠几何"><OverlapIcon /></IconTool>
            <IconTool aria-label="突出显示开放端" $on><OpenEndsIcon /></IconTool>
            <IconTool aria-label="着色封闭环" $on><ShadeLoopIcon /></IconTool>
          </ToolGrid>
        </Group>
        <Group w={88} label="关闭">
          <Big w={42} icon={<OkIcon />} label="确定" />
          <Big w={42} icon={<CancelIcon />} label="取消" />
        </Group>
      </Ribbon>

      <Work>
        <Sidebar>
          <SideTabs>
            <SideTab $on $w={78}><TreeTabIcon />模型树</SideTab>
            <SideTab $w={71}><FolderTabIcon /><Faded>文件夹</Faded></SideTab>
            <SideTab $w={71}><FavTabIcon /><Faded>收藏夹</Faded></SideTab>
          </SideTabs>
          <PanelHead>
            <PanelTitle>模型树</PanelTitle>
            <PanelButton $w={24} aria-label="工具"><ToolsIcon /></PanelButton>
            <PanelButton $w={18} aria-label="工具列表"><Caret /></PanelButton>
            <PanelButton $w={26} aria-label="显示"><ListIcon /></PanelButton>
            <PanelButton $w={18} aria-label="显示列表"><Caret /></PanelButton>
            <PanelButton $w={34} aria-label="隐藏项"><HideTreeIcon /></PanelButton>
          </PanelHead>
          <FilterRow>
            <FilterIcon />
            <SearchBox>
              <SearchInput aria-label="过滤模型树" />
              <Draw w={10}><path d="M1 1l8 8M9 1L1 9" stroke="#9ba0a2" /></Draw>
            </SearchBox>
            <PanelButton $w={18} aria-label="过滤器列表"><Caret /></PanelButton>
            <PanelButton $w={26} aria-label="添加"><Draw w={12}><path d="M6 0v12M0 6h12" stroke="#8f9596" strokeWidth="3" /></Draw></PanelButton>
          </FilterRow>
          <Tree>
            {treeItems.map(item => (
              <TreeRow key={item.name} $root={item.root}>
                {item.expand && <Expander aria-label="展开"><Draw w={9} h={10}><path d="M0 0l9 5-9 5z" fill="#85898b" stroke="none" /></Draw></Expander>}
                {item.icon}
                <TreeName $on={item.on}>{item.name}</TreeName>
              </TreeRow>
            ))}
          </Tree>
          <InsertBar />
          <TreeRow as="div">
            <ExtrudeIcon />
            <TreeName><NewStarIcon />拉伸 3</TreeName>
          </TreeRow>
        </Sidebar>

        <Stage>
          <ModelScene />
          <ViewBar>
            {viewTools.map(v => (
              <ViewButton key={v.label} aria-label={v.label} $on={v.on}>{v.icon}{v.fly && <Fly />}</ViewButton>
            ))}
          </ViewBar>
        </Stage>
      </Work>

      <StatusBar>
        <IconTool $on aria-label="导航器"><NavPanelIcon /></IconTool>
        <PanelButton $w={28} aria-label="浏览器"><BrowserIcon /></PanelButton>
        <PanelButton $w={26} aria-label="全屏"><FullScreenIcon /></PanelButton>
        <StatusRule $h={26} />
        <StatusMessage><Bullet />当约束处于活动状态时，可通过单击右键在锁定/禁用/启用约束之间切换。使用 Tab 键可切换活动约束。按住 Shift 键可禁用捕捉到新约束。</StatusMessage>
        <StatusTail>
          <Rule $h={26} /><Rule $h={26} />
          <FindButton aria-label="查找"><FindIcon><BinocularsIcon /></FindIcon><FindCaret><Caret color="#a5abac" /></FindCaret></FindButton>
          <Rule $h={26} />
          <FilterSelect>
            <NativeSelect aria-label="选择过滤器" defaultValue=""><option value=""></option></NativeSelect>
            <SelectCaret><Caret color="#8f9596" /></SelectCaret>
          </FilterSelect>
        </StatusTail>
      </StatusBar>
    </Shell>
  );
}
